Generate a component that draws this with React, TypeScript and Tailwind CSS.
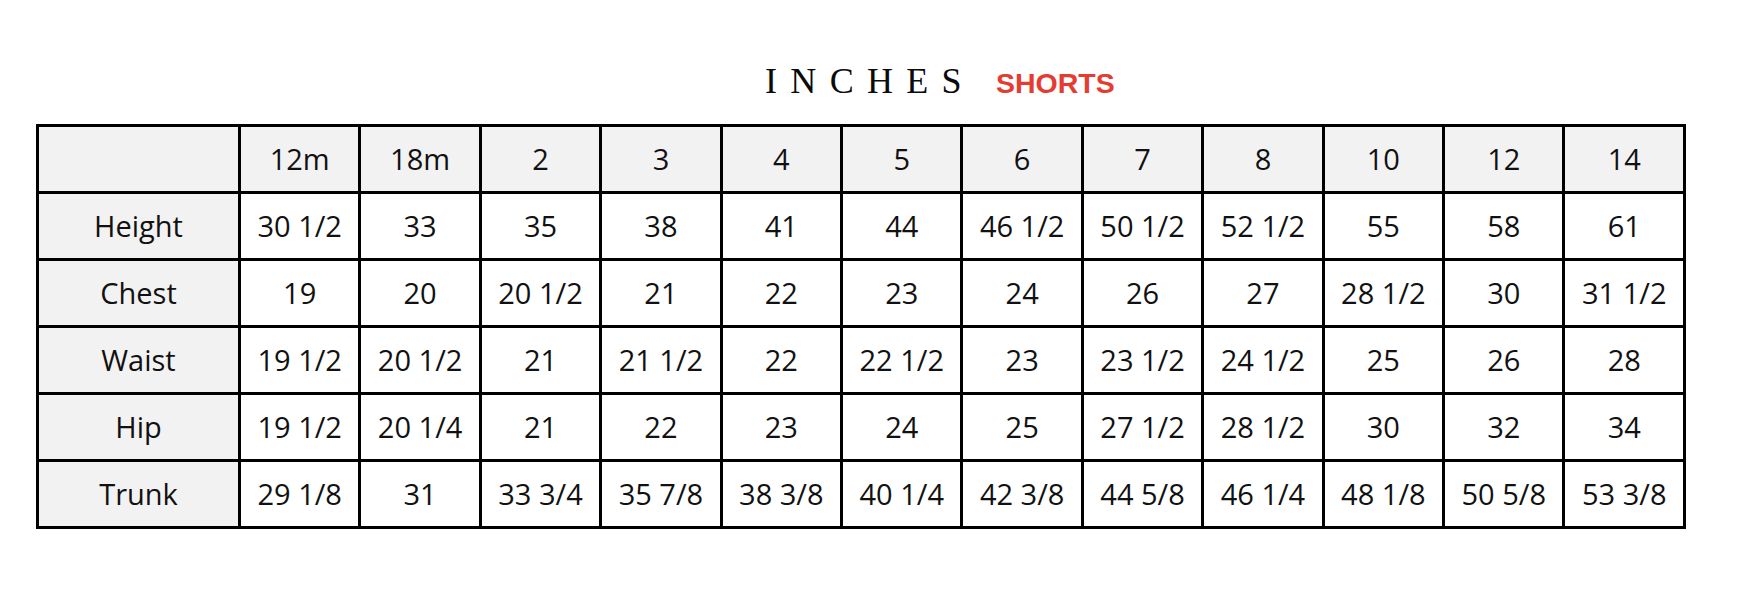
import React from 'react';

const sizes = ['12m', '18m', '2', '3', '4', '5', '6', '7', '8', '10', '12', '14'];

const rows = [
  {
    label: 'Height',
    values: ['30 1/2', '33', '35', '38', '41', '44', '46 1/2', '50 1/2', '52 1/2', '55', '58', '61'],
  },
  {
    label: 'Chest',
    values: ['19', '20', '20 1/2', '21', '22', '23', '24', '26', '27', '28 1/2', '30', '31 1/2'],
  },
  {
    label: 'Waist',
    values: ['19 1/2', '20 1/2', '21', '21 1/2', '22', '22 1/2', '23', '23 1/2', '24 1/2', '25', '26', '28'],
  },
  {
    label: 'Hip',
    values: ['19 1/2', '20 1/4', '21', '22', '23', '24', '25', '27 1/2', '28 1/2', '30', '32', '34'],
  },
  {
    label: 'Trunk',
    values: ['29 1/8', '31', '33 3/4', '35 7/8', '38 3/8', '40 1/4', '42 3/8', '44 5/8', '46 1/4', '48 1/8', '50 5/8', '53 3/8'],
  },
];

export default function App() {
  return (
    <div className="w-[1750px] h-[608px] bg-white pl-[36px] pt-[63px]">
      {/* Title */}
      <div className="flex items-baseline gap-[34px] ml-[729px] h-[61px]">
        <h1 className="font-['Liberation_Serif',serif] text-[36px] tracking-[0.37em] text-[#0a0a0a] leading-none">
          INCHES
        </h1>
        <span className="font-['Liberation_Sans',Arial,sans-serif] font-bold text-[28.5px] text-[#e53b30] leading-none -ml-[13px]">
          SHORTS
        </span>
      </div>

      {/* Size chart */}
      <table className="w-[1650px] table-fixed border-collapse border-[3px] border-black font-['Open_Sans',sans-serif] text-[29px] text-[#111]">
        <colgroup>
          <col className="w-[202px]" />
          {sizes.map((s) => (
            <col key={s} />
          ))}
        </colgroup>
        <thead>
          <tr className="h-[67px] bg-[#f3f2f2]">
            <th className="border-[3px] border-black font-normal"></th>
            {sizes.map((s) => (
              <th key={s} className="border-[3px] border-black font-normal text-center">
                {s}
              </th>
            ))}
          </tr>
        </thead>
        <tbody>
          {rows.map((row) => (
            <tr key={row.label} className="h-[67px]">
              <td className="border-[3px] border-black bg-[#f3f2f2] text-center">{row.label}</td>
              {row.values.map((v, i) => (
                <td key={i} className="border-[3px] border-black bg-white text-center whitespace-nowrap">
                  {v}
                </td>
              ))}
            </tr>
          ))}
        </tbody>
      </table>
    </div>
  );
}
